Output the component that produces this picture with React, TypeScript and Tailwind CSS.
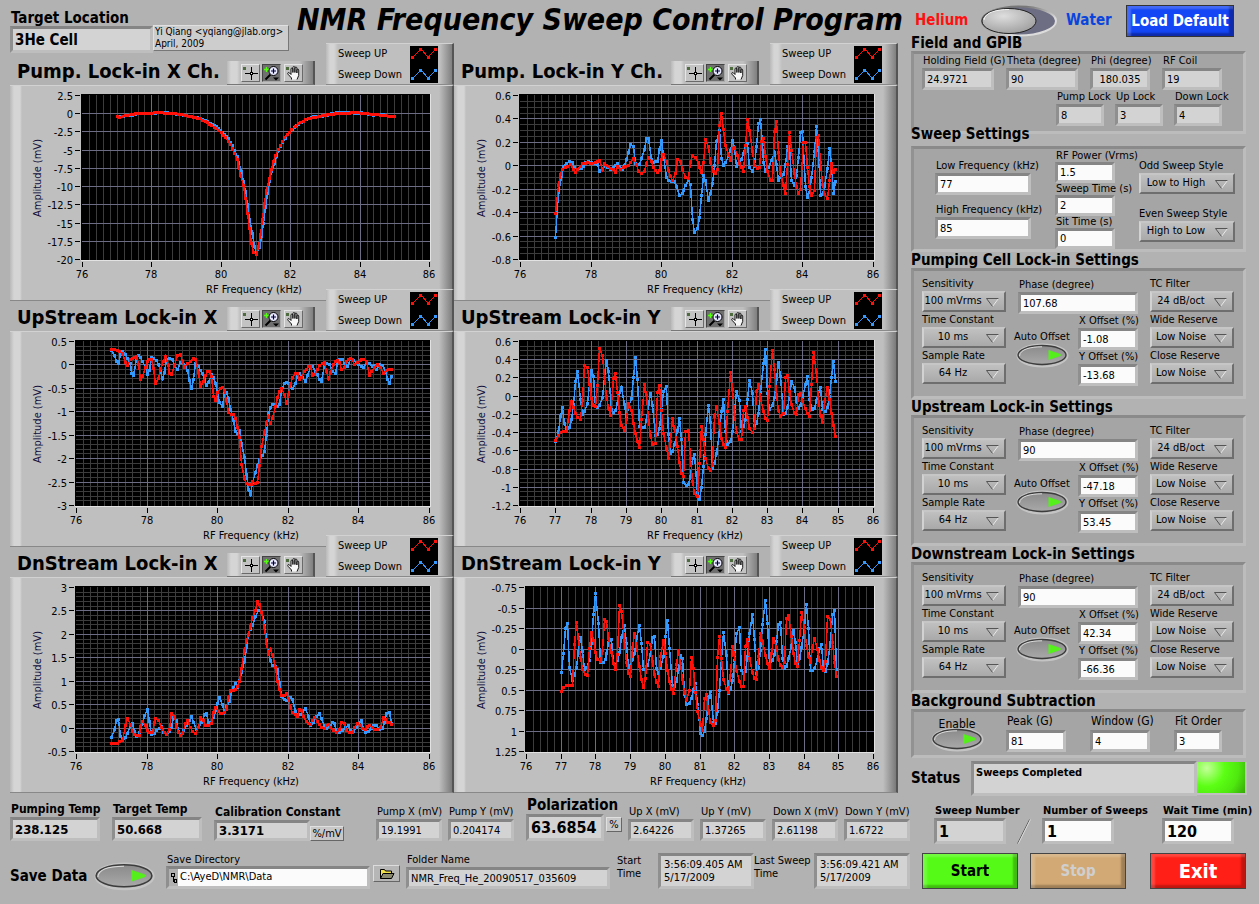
import { useId, useState } from "react";
import clsx from "clsx";

const RED = "#ff1008";
const BLUE = "#3399ff";

interface GraphSpec {
  title: string;
  left: number;
  yTop: number;
  yBottom: number;
  yStep: number;
  yMinor: number;
  xStep: number;
  offset: [number, number];
  up: string;
  down: string;
}

// Traces are stored at three units per pixel; offset moves them into the graph frame.
const graphs: GraphSpec[] = [
  {
    title: "Pump. Lock-in X Ch.",
    left: 72,
    yTop: 2.5,
    yBottom: -20,
    yStep: 2.5,
    yMinor: 1,
    xStep: 2,
    offset: [-10, -85],
    up: "351,349 359,351 367,348 375,346 390,344 400,342 415,341 430,340 450,340 468,338 486,338 500,340 520,340 535,343 560,346 580,352 600,356 615,364 628,372 642,381 655,390 665,398 671,407 677,413 684,423 691,433 698,446 704,461 711,479 716,499 722,526 729,556 736,595 742,640 748,686 754,730 761,757 769,763 775,740 781,704 788,658 794,610 800,572 808,536 814,509 821,485 827,466 834,449 840,436 848,424 854,412 861,403 868,396 875,388 885,380 895,371 910,363 925,356 940,352 955,350 975,345 1000,342 1025,341 1048,339 1070,338 1090,340 1110,342 1135,344 1150,346 1165,348 1182,349",
    down: "353,350 365,349 398,345 415,339 450,341 480,338 502,338 530,342 565,349 600,355 630,369 648,379 662,391 674,402 685,416 697,436 703,450 711,468 716,487 724,514 730,544 737,574 743,614 749,658 756,701 762,738 769,760 777,742 783,710 789,670 795,622 801,580 809,544 815,514 822,490 828,468 835,452 848,426 862,404 876,388 896,372 926,355 948,348 968,349 1002,339 1048,337 1070,340 1085,338 1120,345 1150,343 1164,350 1180,350",
  },
  {
    title: "Pump. Lock-in Y Ch.",
    left: 66,
    yTop: 0.6,
    yBottom: -0.8,
    yStep: 0.2,
    yMinor: 4,
    xStep: 2,
    offset: [-4, -85],
    up: "317,640 325,556 332,524 338,508 345,502 352,498 362,493 370,508 376,517 383,509 390,500 398,491 405,490 413,487 420,489 427,491 435,488 442,484 449,481 456,507 463,490 470,495 482,505 489,508 496,518 503,500 512,507 520,503 535,497 550,475 558,493 566,513 574,521 583,515 590,490 596,472 603,485 610,503 621,517 629,510 635,477 641,464 649,483 656,511 661,530 668,541 675,521 683,477 690,485 698,507 706,532 715,535 721,488 728,466 736,472 744,488 755,516 761,488 767,418 775,440 782,488 790,515 795,521 801,508 808,377 814,340 821,388 827,437 834,462 841,480 848,445 854,442 861,467 867,490 873,502 881,515 893,358 899,391 907,455 914,495 921,506 927,503 933,423 941,415 947,470 953,513 960,541 968,541 974,395 980,364 986,458 992,520 1000,555 1007,580 1012,493 1019,397 1025,452 1033,521 1040,560 1046,579 1052,568 1059,427 1067,427 1073,503 1079,560 1085,587 1092,572 1099,412 1106,406 1112,487 1118,553 1124,583 1133,595 1139,541 1144,490 1151,517 1157,508",
    down: "317,712 326,577 333,530 341,500 349,491 358,485 367,488 374,503 383,508 393,505 400,498 407,487 415,485 425,487 433,489 441,494 449,514 457,505 465,497 473,503 482,507 489,502 495,497 501,491 508,500 516,508 523,497 529,479 535,457 542,433 551,439 557,491 568,494 575,476 582,449 590,415 596,415 603,479 610,487 622,484 628,449 635,421 641,466 649,532 656,541 664,544 672,545 680,560 688,587 696,580 701,572 707,556 714,541 720,553 727,659 734,697 742,686 749,653 755,586 761,526 767,541 775,601 781,580 788,550 793,497 800,424 808,391 814,475 821,497 827,487 834,470 841,452 848,421 854,445 860,499 866,490 874,479 880,461 886,437 893,430 898,503 907,514 914,496 920,440 926,370 932,358 938,434 940,487 947,514 955,503 965,480 974,458 980,493 986,541 992,532 1000,523 1006,494 1013,439 1019,440 1025,541 1033,556 1040,526 1046,472 1052,397 1058,394 1066,560 1073,592 1079,578 1085,532 1092,455 1099,379 1105,452 1112,586 1118,583 1124,560 1131,505 1138,445 1144,490 1150,580 1157,545",
  },
  {
    title: "UpStream Lock-in X",
    left: 66,
    yTop: 0.5,
    yBottom: -3,
    yStep: 0.5,
    yMinor: 5,
    xStep: 2,
    offset: [-10, -35],
    up: "335,160 343,160 351,163 359,167 368,173 376,200 383,208 390,190 397,187 409,182 415,205 422,250 428,241 435,214 442,196 449,190 455,191 461,217 467,262 475,247 482,217 489,196 497,182 504,208 508,232 514,235 522,208 532,179 541,176 548,197 554,214 562,202 570,197 580,187 587,190 594,229 602,271 609,256 615,238 622,227 628,227 635,241 641,301 647,313 653,290 660,276 668,274 674,283 680,313 686,349 694,355 701,356 706,367 713,394 718,424 725,505 734,547 740,562 747,566 753,565 758,556 766,562 773,559 778,508 785,451 794,409 800,379 806,360 812,382 818,367 826,331 833,304 839,287 845,277 852,295 859,322 866,295 872,265 878,244 885,233 893,232 899,250 905,245 913,226 919,219 926,211 932,211 938,238 944,235 951,220 958,208 966,202 972,199 978,226 985,247 992,229 1000,205 1006,196 1013,193 1019,199 1024,220 1032,215 1040,196 1052,187 1058,190 1064,205 1072,200 1080,193 1091,190 1100,197 1108,238 1114,226 1122,215 1131,205 1140,215 1150,232 1158,223 1166,220 1175,220",
    down: "335,163 343,178 349,196 355,202 361,175 368,167 376,176 383,187 390,202 394,232 401,238 408,190 415,178 422,184 428,197 435,214 442,235 449,223 455,184 461,187 468,193 476,205 482,226 487,247 494,229 500,190 508,187 516,191 524,208 532,220 540,199 548,198 556,208 562,223 568,253 574,277 581,250 587,202 594,211 601,223 607,232 613,250 619,268 626,259 633,235 640,244 647,262 653,292 659,319 667,331 674,290 680,289 686,308 692,340 700,373 706,406 713,412 718,403 725,442 733,484 740,535 746,580 752,595 758,558 766,529 772,508 779,490 786,478 794,466 799,418 806,352 812,334 818,325 826,325 833,331 839,325 845,283 852,263 860,259 866,262 872,274 878,277 885,262 893,240 899,232 907,244 916,256 922,238 930,214 938,211 946,226 951,235 959,250 965,257 972,208 980,202 989,205 997,226 1005,232 1012,200 1019,190 1026,191 1034,202 1042,211 1050,190 1060,193 1068,199 1076,205 1083,211 1091,214 1099,200 1108,202 1116,211 1122,208 1130,220 1138,205 1146,208 1155,223 1162,250 1168,262 1175,241",
  },
  {
    title: "UpStream Lock-in Y",
    left: 66,
    yTop: 0.6,
    yBottom: -1.2,
    yStep: 0.2,
    yMinor: 4,
    xStep: 1,
    offset: [-4, -35],
    up: "317,433 325,418 332,410 340,406 350,406 359,343 365,316 377,352 383,364 391,371 398,313 404,208 411,215 417,265 425,307 431,328 437,331 443,268 449,157 458,178 464,245 470,301 476,337 482,358 490,247 496,232 502,289 509,349 515,388 524,403 530,370 536,323 543,343 550,382 557,412 563,436 569,454 575,371 584,265 590,298 596,373 602,418 608,445 617,442 623,290 629,268 635,343 641,412 649,457 656,487 662,436 668,367 674,397 682,451 688,499 695,532 701,541 707,406 715,403 721,487 728,556 734,592 743,602 749,503 755,391 761,430 767,487 775,517 782,524 788,505 794,361 800,331 808,382 815,427 821,445 827,454 833,346 841,229 848,280 854,356 860,409 867,430 875,430 881,343 887,332 893,364 899,397 908,409 914,397 920,286 926,265 932,307 941,346 947,367 953,373 959,271 968,163 974,220 980,295 986,343 992,361 1000,352 1006,244 1013,238 1019,286 1025,325 1033,352 1040,355 1046,296 1052,292 1058,316 1067,337 1073,352 1079,361 1085,265 1091,169 1100,229 1106,316 1112,358 1118,379 1124,316 1133,274 1139,310 1145,352 1151,388 1157,421",
    down: "317,437 325,406 331,361 338,334 344,382 350,404 359,394 365,370 371,325 377,256 383,226 392,310 398,355 404,346 411,322 417,265 425,223 431,241 436,330 443,334 449,328 458,304 464,245 470,194 476,226 484,340 491,350 497,343 502,322 508,289 515,274 524,325 530,370 536,330 543,307 550,244 557,184 563,251 569,391 576,394 584,394 590,373 596,325 602,292 608,328 616,418 623,415 629,397 635,340 641,286 649,271 656,415 662,472 668,466 674,445 682,403 688,367 694,430 701,559 708,568 715,565 721,541 728,487 734,475 743,590 749,611 755,574 761,511 767,415 775,328 782,379 788,517 794,503 800,472 808,409 815,346 821,310 827,406 833,446 842,436 848,406 854,346 860,286 867,313 875,406 881,391 887,370 893,311 899,253 908,292 914,388 920,382 926,352 932,289 941,202 947,160 953,292 959,340 968,328 974,304 980,250 986,199 992,241 1000,355 1006,352 1013,334 1019,304 1025,256 1034,274 1040,316 1046,337 1052,328 1058,304 1067,265 1073,241 1079,310 1086,340 1092,337 1100,313 1106,286 1112,274 1118,340 1125,346 1133,334 1139,301 1145,244 1151,196 1157,256",
  },
  {
    title: "DnStream Lock-in X",
    left: 66,
    yTop: 3,
    yBottom: -0.5,
    yStep: 0.5,
    yMinor: 5,
    xStep: 2,
    offset: [-10, -37],
    up: "335,610 343,610 351,609 359,605 368,601 376,556 383,536 390,553 397,574 404,583 411,586 417,585 422,560 428,545 435,556 442,571 449,577 457,576 463,547 467,536 476,541 484,562 492,578 500,583 508,568 515,520 522,529 528,559 535,577 542,586 548,580 556,550 562,541 570,562 578,574 586,580 594,562 602,532 610,541 617,556 626,557 634,550 641,517 647,502 654,515 661,520 668,520 674,517 680,508 686,472 692,452 700,451 706,448 713,440 718,424 725,385 733,331 740,301 746,283 752,260 758,232 766,211 773,184 778,193 784,217 792,262 799,310 806,342 812,328 818,343 826,383 832,424 838,448 845,466 852,467 860,460 866,476 872,502 878,517 885,524 893,529 899,508 905,511 911,529 919,544 926,549 932,553 938,541 944,532 951,544 958,553 964,562 972,565 980,556 986,553 992,562 1000,571 1008,577 1017,568 1024,547 1032,549 1040,571 1048,576 1058,577 1064,562 1072,550 1080,556 1088,565 1096,568 1102,559 1108,556 1116,562 1124,568 1132,568 1140,562 1150,532 1156,538 1162,547 1168,548 1175,553",
    down: "335,592 343,568 350,541 355,538 361,589 368,601 376,592 383,580 390,556 396,550 404,574 410,590 418,577 427,550 434,526 443,509 449,545 455,583 462,580 470,572 478,565 485,559 491,576 500,583 508,574 515,562 521,529 528,541 534,574 542,582 550,570 560,556 568,541 574,529 581,547 588,568 596,562 604,547 612,523 619,520 626,547 634,547 641,532 648,508 653,490 658,472 667,493 674,517 680,500 688,485 692,462 700,442 706,430 713,441 718,422 725,397 734,364 740,323 746,284 752,268 758,255 767,229 774,211 784,216 792,243 799,302 806,340 812,362 818,376 826,379 833,388 839,427 845,470 852,479 860,481 866,476 872,472 878,479 885,515 893,524 900,523 907,515 916,505 924,529 932,556 940,547 950,529 958,520 965,535 972,559 980,565 990,556 997,547 1004,550 1010,574 1018,577 1028,572 1036,562 1044,556 1052,571 1060,574 1068,562 1076,550 1084,541 1090,568 1097,577 1105,574 1113,565 1121,557 1130,557 1138,568 1146,565 1153,547 1160,520 1168,517 1175,550",
  },
  {
    title: "DnStream Lock-in Y",
    left: 72,
    yTop: -0.75,
    yBottom: 1.25,
    yStep: 0.25,
    yMinor: 1,
    xStep: 1,
    offset: [-4, -37],
    up: "334,455 341,442 348,437 358,436 368,436 374,313 380,247 386,295 392,352 398,388 406,403 412,406 418,325 425,277 431,302 437,337 443,358 451,364 458,331 464,238 470,244 476,295 484,337 490,370 496,388 503,343 509,196 515,214 523,301 529,367 535,400 541,409 547,322 554,280 560,319 569,379 575,418 581,442 587,415 593,307 601,313 607,364 613,403 620,427 626,439 632,349 640,301 646,340 653,391 659,424 665,448 671,460 679,373 685,331 691,370 698,418 704,458 710,478 718,451 725,352 731,385 737,457 743,514 751,553 757,571 763,475 770,463 776,511 782,547 791,556 797,541 803,352 809,289 815,355 821,418 829,448 835,457 842,406 848,319 854,343 860,391 868,424 874,439 881,439 887,319 893,298 899,355 907,397 914,415 920,418 926,349 932,280 938,304 946,346 952,370 958,385 965,340 971,295 978,322 986,358 992,376 998,382 1004,367 1010,236 1016,226 1025,289 1031,340 1037,370 1043,379 1049,301 1055,217 1063,262 1069,316 1076,349 1082,367 1087,322 1094,295 1103,328 1109,361 1115,383 1121,391 1127,364 1133,229 1142,238 1148,307 1154,367 1160,409",
    down: "334,397 340,340 346,265 352,251 359,382 368,420 374,406 380,382 386,334 392,292 398,334 404,388 410,382 418,361 425,310 431,223 437,160 446,250 452,367 459,367 465,358 470,340 476,307 484,298 490,370 497,376 503,361 509,337 515,292 524,256 530,310 536,382 541,376 547,358 554,340 560,295 569,256 575,310 581,388 587,388 593,376 601,343 607,292 613,289 620,385 626,400 632,385 640,349 646,289 652,241 659,325 667,436 673,439 680,424 686,388 692,346 698,355 704,463 710,493 718,490 725,475 731,448 737,430 743,493 751,580 757,586 763,574 769,535 776,472 782,454 790,547 797,550 803,514 809,451 815,355 821,277 829,346 835,460 842,448 848,421 854,361 860,280 868,262 874,391 881,400 887,394 893,349 899,280 907,223 914,298 920,400 926,382 932,331 938,253 946,181 952,250 958,370 966,361 972,343 978,304 986,253 992,247 998,355 1004,385 1010,379 1016,355 1025,316 1031,271 1037,307 1043,373 1049,355 1055,322 1063,262 1069,193 1076,265 1082,391 1088,391 1094,385 1103,358 1109,325 1115,313 1121,388 1127,394 1133,370 1142,307 1148,223 1154,211 1160,388",
  },
];

function parseTrace(trace: string) {
  const points = trace.split(" ").map((p) => p.split(",").map(Number));
  const out: number[][] = [];
  points.forEach(([x, y], i) => {
    if (i > 0) {
      const [px, py] = points[i - 1];
      const n = Math.round((x - px) / 7);
      for (let k = 1; k < n; k++) {
        out.push([px + ((x - px) * k) / n, py + ((y - py) * k) / n]);
      }
    }
    out.push([x, y]);
  });
  return out;
}

function Trace({ data, color, offset }: { data: string; color: string; offset: [number, number] }) {
  const points = parseTrace(data).map(([x, y]) => [
    Math.round(x / 3 + offset[0] - 0.5),
    Math.round(y / 3 + offset[1] - 0.5),
  ]);
  return (
    <g fill={color} stroke="none">
      <polyline
        points={points.map(([x, y]) => `${x + 0.5},${y + 0.5}`).join(" ")}
        fill="none"
        stroke={color}
        strokeWidth={1.5}
      />
      {points.map(([x, y], i) => (
        <rect key={i} x={x - 1} y={y - 1} width={3} height={3} />
      ))}
    </g>
  );
}

const TOP = 10;
const BOTTOM = 175;
const RIGHT = 420;

function Plot({ graph }: { graph: GraphSpec }) {
  const { left, yTop, yBottom, yStep, yMinor, xStep } = graph;
  const toX = (khz: number) => Math.round(left + ((khz - 76) / 10) * (RIGHT - left - 1));
  const rows = Math.round(Math.abs(yBottom - yTop) / yStep);
  const toY = (row: number) => Math.round(TOP + (row / rows) * (BOTTOM - TOP - 1));
  const dir = yBottom > yTop ? 1 : -1;

  return (
    <svg
      viewBox="0 0 444 216"
      className="block w-full h-auto text-[11px]"
      role="img"
      aria-label={graph.title}
    >
      <g shapeRendering="crispEdges">
        <rect x={left - 1} y={TOP - 1} width={RIGHT - left + 2} height={BOTTOM - TOP + 2} fill="#e2e2e2" />
        <rect x={left - 1} y={TOP - 1} width={RIGHT - left + 1} height={BOTTOM - TOP + 1} fill="#000" />
        {/* Minor grid */}
        {Array.from({ length: 49 }, (_, i) => (
          <rect key={i} x={toX(76 + (i + 1) * 0.2)} y={TOP} width={1} height={BOTTOM - TOP} fill="#3c3c3c" />
        ))}
        {yMinor > 1 &&
          Array.from({ length: rows * yMinor - 1 }, (_, i) => (
            <rect key={i} x={left} y={toY((i + 1) / yMinor)} width={RIGHT - left} height={1} fill="#3c3c3c" />
          ))}
        {/* Major grid */}
        {Array.from({ length: 10 / xStep - 1 }, (_, i) => (
          <rect key={i} x={toX(76 + (i + 1) * xStep)} y={TOP} width={1} height={BOTTOM - TOP} fill="#6c6c84" />
        ))}
        {Array.from({ length: rows - 1 }, (_, i) => (
          <rect key={i} x={left} y={toY(i + 1)} width={RIGHT - left} height={1} fill="#6c6c84" />
        ))}
        <Trace data={graph.down} color={BLUE} offset={graph.offset} />
        <Trace data={graph.up} color={RED} offset={graph.offset} />
        {Array.from({ length: rows + 1 }, (_, i) => (
          <rect key={i} x={left - 7} y={toY(i)} width={5} height={1} fill="#000" />
        ))}
        {Array.from({ length: 10 / xStep + 1 }, (_, i) => (
          <rect key={i} x={toX(76 + i * xStep)} y={177} width={1} height={5} fill="#000" />
        ))}
      </g>
      {Array.from({ length: rows + 1 }, (_, i) => (
        <text key={i} x={left - 9} y={toY(i) + 5} textAnchor="end">
          {String(Number((yTop + dir * i * yStep).toFixed(2)))}
        </text>
      ))}
      {Array.from({ length: 10 / xStep + 1 }, (_, i) => (
        <text key={i} x={toX(76 + i * xStep)} y={193} textAnchor="middle">
          {76 + i * xStep}
        </text>
      ))}
      <text x={(left + RIGHT) / 2 - 2} y={208} textAnchor="middle">
        RF Frequency (kHz)
      </text>
      <text transform="translate(31 93) rotate(-90)" textAnchor="middle" fill="#10103c">
        Amplitude (mV)
      </text>
    </svg>
  );
}

function LegendSample({ color, y }: { color: string; y: number }) {
  return (
    <g fill={color}>
      <polyline points={`3,${y + 8} 11,${y} 18,${y + 8} 26,${y}`} fill="none" stroke={color} />
      <rect x={1} y={y + 7} width={3} height={3} />
      <rect x={9} y={y - 1} width={3} height={3} />
      <rect x={17} y={y + 7} width={3} height={3} />
      <rect x={24} y={y - 1} width={3} height={3} />
    </g>
  );
}

function Palette() {
  const tool =
    "h-[18px] w-[19px] border border-t-[#e6e6e6] border-l-[#e6e6e6] border-r-[#6a6a6a] border-b-[#6a6a6a]";
  return (
    <div className="flex h-6 w-[88px] items-center gap-[2px] border-b border-b-[#777] border-r-2 border-r-[#555] bg-[linear-gradient(to_right,#b9b9b9_0,#d5d5d5_4px,#d5d5d5_10px,#bfbfbf_13px,#bfbfbf_72px,#808080)] pl-[14px]">
      <button type="button" aria-label="Cursor movement" className={clsx(tool, "bg-[#c3c3c3]")}>
        <svg viewBox="0 0 17 16" className="block" shapeRendering="crispEdges">
          <rect x="1" y="2" width="3" height="3" fill="#4d6b3f" />
          <path d="M9.500 2v5M9.500 10v5M3 8.500h5M11 8.500h5" stroke="#000" />
          <rect x="8" y="7" width="3" height="3" />
          <rect x="9" y="8" width="1" height="1" fill="#fff" />
        </svg>
      </button>
      <button
        type="button"
        aria-label="Zoom"
        className="h-[18px] w-[19px] border border-t-[#444] border-l-[#444] border-r-[#aaa] border-b-[#aaa] bg-[#6f6f6f]"
      >
        <svg viewBox="0 0 17 16" className="block">
          <path d="M3.500 2v5M1 4.500h5" stroke="#55ff11" strokeWidth="1.400" />
          <path d="M7.500 9.500 2.500 14.500" stroke="#000" strokeWidth="2" />
          <circle cx="10.500" cy="6" r="4.500" fill="#e8e8ff" stroke="#000" />
          <path d="M10.500 3.500v5M8 6h5" stroke="#000033" strokeWidth="1.200" />
          <path d="M10 12.500h6l-3 3z" />
        </svg>
      </button>
      <button type="button" aria-label="Pan" className={clsx(tool, "ml-px bg-[#c3c3c3]")}>
        <svg viewBox="0 0 17 16" className="block">
          <rect x="1" y="2" width="3" height="3" fill="#4d6b3f" />
          <path
            d="M6.500 14.500V13L3 9.200c-.9-1.500.6-2.200 1.600-1.200L6 9.500V4c0-1.300 1.900-1.300 1.900 0v3.500V2.500c0-1.300 2-1.300 2 0v5V3c0-1.300 2-1.300 2 0v5V5c0-1.200 1.800-1.200 1.800 0v5.500L12 14.500"
            fill="#f8f8f8"
            stroke="#000"
            strokeWidth="0.900"
          />
        </svg>
      </button>
    </div>
  );
}

function Graph({ graph }: { graph: GraphSpec }) {
  return (
    <section className="-mb-3">
      <div className="relative z-10 flex h-[42px] items-end gap-[11px]">
        <div className="flex flex-1 items-end">
          <h2 className="flex-1 pl-[7px] text-[20px] leading-7 font-bold whitespace-nowrap">{graph.title}</h2>
          <Palette />
        </div>
        <div className="flex h-[42px] w-[128px] items-center justify-between border-t border-r-2 border-b border-t-[#d2d2d2] border-r-[#555] border-b-[#8a8a8a] bg-[linear-gradient(to_right,#b9b9b9_0,#d5d5d5_4px,#d5d5d5_8px,#bfbfbf_12px,#bfbfbf_114px,#808080)] pr-[14px] pl-3">
          <ul className="text-[11px] leading-[21px]">
            <li>Sweep UP</li>
            <li>Sweep Down</li>
          </ul>
          <svg width="28" height="37" shapeRendering="crispEdges" aria-hidden="true">
            <rect width="28" height="37" fill="#000" />
            <LegendSample color={RED} y={3} />
            <LegendSample color={BLUE} y={24} />
          </svg>
        </div>
      </div>
      <div className="border-t border-r-2 border-b border-t-[#d2d2d2] border-r-[#555] border-b-[#888] bg-[linear-gradient(to_right,#b9b9b9_0,#d5d5d5_4px,#d5d5d5_10px,#bfbfbf_12px,#bfbfbf_calc(100%-13px),#7a7a7a)]">
        <div className="-mr-[2px] -mt-px -mb-px">
          <Plot graph={graph} />
        </div>
      </div>
    </section>
  );
}

const sunken =
  "border-[3px] border-t-[#858585] border-l-[#8f8f8f] border-r-[#bebebe] border-b-[#bebebe]";

interface FieldProps {
  label: string;
  value: string;
  width: string;
  height?: string;
  readOnly?: boolean;
  labelClass?: string;
  inputClass?: string;
}

function Field({
  label,
  value,
  width,
  height = "h-[22px]",
  readOnly,
  labelClass = "text-[11px] leading-[14px]",
  inputClass = "text-[11px]",
}: FieldProps) {
  const id = useId();
  return (
    <div className={clsx("flex flex-col", width)}>
      <label htmlFor={id} className={clsx("relative pl-px whitespace-nowrap", labelClass)}>
        {label}
      </label>
      <input
        id={id}
        defaultValue={value}
        readOnly={readOnly}
        className={clsx(
          "w-full px-[2px] outline-none",
          sunken,
          height,
          readOnly ? "bg-[#d3d3d3]" : "bg-[#fbfbfb]",
          inputClass,
        )}
      />
    </div>
  );
}

interface RingProps {
  label: string;
  options: string[];
  width: string;
}

function Ring({ label, options, width }: RingProps) {
  const id = useId();
  return (
    <div className={width}>
      <label htmlFor={id} className="block text-[11px] leading-[15px] whitespace-nowrap">
        {label}
      </label>
      <div className="relative">
        <select
          id={id}
          className="block h-[21px] w-full appearance-none border-2 border-t-[#c6c6c6] border-r-[#6e6e6e] border-b-[#6e6e6e] border-l-[#d2d2d2] bg-[linear-gradient(#c0c0c0,#a9a9a9)] pr-[22px] text-center text-[11px] outline-none"
        >
          {options.map((o) => (
            <option key={o}>{o}</option>
          ))}
        </select>
        <svg className="pointer-events-none absolute top-[7px] right-[7px]" width="13" height="9" fill="none">
          <path d="M12.500 0.500 6.500 8.500" stroke="#e8e8e8" />
          <path d="M12.500 0.500H0.500L6.500 8.500" stroke="#555" />
        </svg>
      </div>
    </div>
  );
}

function OvalButton({ label, className }: { label: string; className: string }) {
  const [on, setOn] = useState(true);
  return (
    <button type="button" aria-label={label} aria-pressed={on} onClick={() => setOn(!on)} className={className}>
      <svg viewBox="0 0 50 22" className="block w-full overflow-visible">
        <defs>
          <linearGradient id="oval" x1="0" x2="0" y1="0" y2="1">
            <stop offset="0" stopColor="#8a8a8a" />
            <stop offset="1" stopColor="#a9a9a9" />
          </linearGradient>
        </defs>
        <ellipse cx="25.500" cy="11.500" rx="25" ry="11" fill="none" stroke="#c4c4c4" strokeWidth="2" />
        <ellipse cx="25" cy="11" rx="24" ry="9.500" fill="url(#oval)" stroke="#3c3c3c" strokeWidth="1.400" />
        <path d="M2.500 12C3 5 14 2.800 25 2.800" fill="none" stroke="#dcdcdc" />
        <path d="M31.500 6 42 9.500c2.600.9 2.600 2.200 0 3L31.500 16z" fill={on ? "#55f01c" : "#4b6b3c"} />
      </svg>
    </button>
  );
}

function Panel({ title, className, children }: { title: string; className: string; children: React.ReactNode }) {
  return (
    <section>
      <h2 className="relative h-4 text-[15px] leading-4 font-bold whitespace-nowrap">{title}</h2>
      <div
        className={clsx(
          "w-[335px] border-[3px] border-t-[#8a8a8a] border-l-[#929292] border-r-[#bcbcbc] border-b-[#bcbcbc] bg-[#a5a5a5]",
          className,
        )}
      >
        {children}
      </div>
    </section>
  );
}

const lockins = [
  { title: "Pumping Cell Lock-in Settings", phase: "107.68", x: "-1.08", y: "-13.68" },
  { title: "Upstream Lock-in Settings", phase: "90", x: "-47.18", y: "53.45" },
  { title: "Downstream Lock-in Settings", phase: "90", x: "42.34", y: "-66.36" },
];

function LockinPanel({ data }: { data: (typeof lockins)[number] }) {
  return (
    <Panel title={data.title} className="flex gap-3 pt-[5px] pb-[10px] pl-2">
      <div className="flex flex-col">
        <Ring label="Sensitivity" options={["100 mVrms", "10 mVrms"]} width="w-[84px]" />
        <Ring label="Time Constant" options={["10 ms", "30 ms"]} width="w-[84px]" />
        <Ring label="Sample Rate" options={["64 Hz", "128 Hz"]} width="w-[84px]" />
      </div>
      <div className="flex w-[120px] flex-col pt-[2px]">
        <Field label="Phase (degree)" value={data.phase} width="w-full" />
        <div className="flex justify-between">
          <div className="-ml-1 flex flex-col items-center pt-4">
            <span className="text-[11px] leading-[14px] whitespace-nowrap">Auto Offset</span>
            <OvalButton label="Auto Offset" className="w-[50px]" />
          </div>
          <div>
            <Field label="X Offset (%)" value={data.x} width="w-[60px]" />
            <Field label="Y Offset (%)" value={data.y} width="w-[60px]" />
          </div>
        </div>
      </div>
      <div className="flex flex-col">
        <Ring label="TC Filter" options={["24 dB/oct", "12 dB/oct"]} width="w-[84px]" />
        <Ring label="Wide Reserve" options={["Low Noise", "Normal"]} width="w-[84px]" />
        <Ring label="Close Reserve" options={["Low Noise", "Normal"]} width="w-[84px]" />
      </div>
    </Panel>
  );
}

function GasSwitch() {
  const [water, setWater] = useState(false);
  return (
    <button
      type="button"
      role="switch"
      aria-checked={water}
      aria-label="Helium or Water"
      onClick={() => setWater(!water)}
      className="w-[78px]"
    >
      <svg viewBox="0 0 78 32" className="block w-full">
        <defs>
          <radialGradient id="knob" cx="0.4" cy="0.3" r="0.7">
            <stop offset="0" stopColor="#dedede" />
            <stop offset="1" stopColor="#a2a2a2" />
          </radialGradient>
          <linearGradient id="rim" x1="0" x2="1" y1="0" y2="1">
            <stop offset="0.300" stopColor="#777" />
            <stop offset="0.700" stopColor="#dcdcdc" />
          </linearGradient>
        </defs>
        <ellipse cx="39" cy="16" rx="37" ry="14.500" fill="#6d6d84" stroke="url(#rim)" strokeWidth="2" />
        <ellipse cx={water ? 49 : 29} cy="16" rx="27" ry="12.500" fill="url(#knob)" stroke="#222" />
        <path d="M4 15C5 7 17 4.500 29 4.500" fill="none" stroke="#f4f4f4" />
      </svg>
    </button>
  );
}

function TimeBox({ label, value, width }: { label: string; value: string; width: string }) {
  const id = useId();
  return (
    <div className="flex items-start">
      <label htmlFor={id} className={clsx("pt-px text-[11px] leading-[13px] whitespace-pre-line", width)}>
        {label}
      </label>
      <textarea
        id={id}
        readOnly
        rows={2}
        defaultValue={value}
        className={clsx(
          "block h-9 w-24 resize-none overflow-hidden bg-[#d3d3d3] px-[3px] pt-[2px] text-[11px] leading-[13px] whitespace-pre outline-none",
          sunken,
        )}
      />
    </div>
  );
}

const actionButton =
  "h-9 w-24 border border-[#444] font-bold shadow-[inset_4px_3px_2px_rgba(255,255,255,0.18),inset_-4px_-3px_2px_rgba(0,0,0,0.25)]";

const boldLabel = "text-[12px] leading-[15px] font-bold";
const sweepLabel = "text-[11px] leading-[15px] font-bold";

export default function App() {
  return (
    <div className="flex min-h-[904px] w-full bg-[#b2b2b2] font-['DejaVu_Sans_Condensed','DejaVu_Sans',sans-serif] text-black">
      <main className="min-w-0 flex-1">
        <header className="flex h-[43px] items-start pl-[10px]">
          <div className="pt-[10px]">
            <Field
              label="Target Location"
              value="3He Cell"
              width="w-[143px]"
              height="h-[27px]"
              labelClass="text-[15px] leading-4 font-bold"
              inputClass="text-[15px] font-bold"
              readOnly
            />
          </div>
          <div className="mt-[25px] h-[26px] w-[136px] shrink-0 border border-t-[#e0e0e0] border-l-[#e0e0e0] border-r-[#777] border-b-[#777] bg-[#cdcdcd] pl-px text-[10px] leading-3 whitespace-nowrap">
            Yi Qiang &lt;yqiang@jlab.org&gt;
            <br />
            April, 2009
          </div>
          <h1 className="flex-1 pl-2 text-[30px] leading-10 font-bold whitespace-nowrap italic">
            NMR Frequency Sweep Control Program
          </h1>
        </header>

        <div className="grid grid-cols-2 pr-[13px] pb-3 pl-[10px]">
          {graphs.map((g) => (
            <Graph key={g.title} graph={g} />
          ))}
        </div>

        {/* Readouts */}
        <div className="flex h-12 items-end pl-[10px]">
          <div className="flex gap-3">
            <Field label="Pumping Temp" value="238.125" width="w-[90px]" height="h-6" labelClass={boldLabel} inputClass="text-[13px] font-bold" readOnly />
            <Field label="Target Temp" value="50.668" width="w-[90px]" height="h-6" labelClass={boldLabel} inputClass="text-[13px] font-bold" readOnly />
          </div>
          <div className="ml-3 flex items-end">
            <Field label="Calibration Constant" value="3.3171" width="w-24" height="h-[21px]" labelClass={boldLabel} inputClass="text-[13px] font-bold" readOnly />
            <span className="h-[15px] w-[34px] border border-t-[#e0e0e0] border-l-[#e0e0e0] border-r-[#666] border-b-[#666] bg-[#c8c8c8] text-center text-[11px] leading-[14px]">
              %/mV
            </span>
          </div>
          <div className="ml-8 flex gap-[6px]">
            <Field label="Pump X (mV)" value="19.1991" width="w-[66px]" readOnly />
            <Field label="Pump Y (mV)" value="0.204174" width="w-[66px]" readOnly />
          </div>
          <div className="ml-3 flex items-end">
            <Field label="Polarization" value="63.6854" width="w-[78px]" height="h-[27px]" labelClass="text-[15px] leading-[18px] font-bold" inputClass="text-[16px] font-bold" readOnly />
            <span className="mb-[9px] ml-[2px] h-[15px] w-4 border border-t-[#e0e0e0] border-l-[#e0e0e0] border-r-[#666] border-b-[#666] bg-[#c8c8c8] text-center text-[11px] leading-[14px]">
              %
            </span>
          </div>
          <div className="ml-[6px] flex gap-[6px]">
            <Field label="Up X (mV)" value="2.64226" width="w-[66px]" readOnly />
            <Field label="Up Y (mV)" value="1.37265" width="w-[66px]" readOnly />
            <Field label="Down X (mV)" value="2.61198" width="w-[66px]" readOnly />
            <Field label="Down Y (mV)" value="1.6722" width="w-[66px]" readOnly />
          </div>
        </div>

        {/* Save options */}
        <div className="flex h-12 items-end pl-[10px]">
          <div className="flex w-[156px] items-center gap-2">
            <span className="text-[15px] leading-6 font-bold whitespace-nowrap">Save Data</span>
            <OvalButton label="Save Data" className="w-[58px]" />
          </div>
          <div className="w-[204px]">
            <label htmlFor="save-dir" className="block pl-px text-[11px] leading-[13px]">
              Save Directory
            </label>
            <div className={clsx("flex h-[23px] bg-[#b0b0b0]", sunken)}>
              <svg width="9" height="17" fill="none" stroke="#000" shapeRendering="crispEdges" aria-hidden="true">
                <path d="M2.500 4.500h3v3h-3zM4.500 8v5M4.500 10.500h2.500M5.500 10.500h2v3h-2z" />
              </svg>
              <input
                id="save-dir"
                defaultValue={"C:\\AyeD\\NMR\\Data"}
                className="min-w-0 flex-1 bg-[#fbfbfb] px-[2px] text-[11px] outline-none"
              />
            </div>
          </div>
          <button
            type="button"
            aria-label="Browse"
            className="mb-[7px] ml-[3px] flex h-[17px] w-[27px] items-center justify-center border border-t-[#dcdcdc] border-l-[#dcdcdc] border-r-[#666] border-b-[#666] bg-[#b6b6b6]"
          >
            <svg width="16" height="12" viewBox="0 0 16 12">
              <path d="M1.500 10.500v-9h4l1 1.500h6v2" fill="#f2e24a" stroke="#000" />
              <path d="M1.500 10.500 4 5.500h11l-2.500 5z" fill="#8a8a70" stroke="#000" />
            </svg>
          </button>
          <div className="ml-[6px]">
            <Field label="Folder Name" value="NMR_Freq_He_20090517_035609" width="w-[204px]" height="h-[22px]" readOnly />
          </div>
          <div className="ml-[7px] flex">
            <TimeBox label={"Start\nTime"} value={"3:56:09.405 AM\n5/17/2009"} width="w-[41px]" />
            <TimeBox label={"Last Sweep\nTime"} value={"3:56:09.421 AM\n5/17/2009"} width="w-[60px]" />
          </div>
        </div>
      </main>

      <aside className="w-[348px] shrink-0">
        <div className="flex h-[35px] items-start text-[15px] font-bold">
          <span className="w-[69px] pl-1 leading-10 text-[#ff1010]">Helium</span>
          <div className="pt-[5px]">
            <GasSwitch />
          </div>
          <span className="w-[68px] pl-2 leading-10 text-[#0a44dd]">Water</span>
          <button
            type="button"
            className="mt-[5px] h-8 w-[108px] border border-[#333] bg-[#1446f5] text-[15px] font-bold whitespace-nowrap text-white shadow-[inset_4px_3px_2px_rgba(255,255,255,0.2),inset_-4px_-3px_2px_rgba(0,0,60,0.4)]"
          >
            Load Default
          </button>
        </div>

        <Panel title="Field and GPIB" className="pb-[5px] pl-2">
          <div className="flex gap-3">
            <Field label="Holding Field (G)" value="24.9721" width="w-[72px]" readOnly />
            <Field label="Theta (degree)" value="90" width="w-[72px]" readOnly />
            <Field label="Phi (degree)" value="180.035" width="w-[60px]" inputClass="text-[11px] text-center" readOnly />
            <Field label="RF Coil" value="19" width="w-[60px]" readOnly />
          </div>
          <div className="flex gap-[11px] pl-[134px]">
            <Field label="Pump Lock" value="8" width="w-12" readOnly />
            <Field label="Up Lock" value="3" width="w-12" readOnly />
            <Field label="Down Lock" value="4" width="w-12" readOnly />
          </div>
        </Panel>

        <div className="-mt-2">
          <Panel title="Sweep Settings" className="mt-1 flex gap-6 pl-[21px]">
            <div className="flex flex-col gap-2 pt-[10px]">
              <Field label="Low Frequency (kHz)" value="77" width="w-24" />
              <Field label="High Frequency (kHz)" value="85" width="w-24" />
            </div>
            <div className="flex flex-col pt-px">
              <Field label="RF Power (Vrms)" value="1.5" width="w-[60px]" height="h-[21px]" labelClass="text-[11px] leading-3" />
              <Field label="Sweep Time (s)" value="2" width="w-[60px]" height="h-[21px]" labelClass="text-[11px] leading-3" />
              <Field label="Sit Time (s)" value="0" width="w-[60px]" height="h-[21px]" labelClass="text-[11px] leading-3" />
            </div>
            <div className="flex flex-col gap-3 pt-[9px]">
              <Ring label="Odd Sweep Style" options={["Low to High", "High to Low"]} width="w-24" />
              <Ring label="Even Sweep Style" options={["High to Low", "Low to High"]} width="w-24" />
            </div>
          </Panel>
        </div>

        {lockins.map((l) => (
          <LockinPanel key={l.title} data={l} />
        ))}

        <Panel title="Background Subtraction" className="flex gap-6 pb-[3px] pl-[18px]">
          <div className="flex w-[50px] flex-col items-center pt-1">
            <span className="relative h-3 text-[12px] leading-4">Enable</span>
            <OvalButton label="Enable" className="w-[50px]" />
          </div>
          <Field label="Peak (G)" value="81" width="w-[60px]" labelClass="text-[12px] leading-[18px]" />
          <Field label="Window (G)" value="4" width="w-[60px]" labelClass="text-[12px] leading-[18px]" />
          <Field label="Fit Order" value="3" width="w-12" labelClass="text-[12px] leading-[18px]" />
        </Panel>

        <div className="mt-[3px] flex items-center">
          <label htmlFor="status" className="w-[60px] text-[15px] font-bold">
            Status
          </label>
          <textarea
            id="status"
            readOnly
            defaultValue="Sweeps Completed"
            className={clsx(
              "block h-[35px] w-[226px] resize-none overflow-hidden bg-[#d3d3d3] px-[2px] text-[11px] leading-[18px] font-bold outline-none",
              sunken,
            )}
          />
          <div className="h-[33px] w-[50px] border-r-2 border-b-2 border-[#c0c0c0] bg-[radial-gradient(circle_at_20%_20%,#c4ff9a,#5cff14_40%,#4fe80f_70%,#35a808)]" />
        </div>

        <div className="mt-[7px] flex items-end pl-[23px]">
          <Field label="Sweep Number" value="1" width="w-[72px]" height="h-[26px]" labelClass={sweepLabel} inputClass="text-[16px] font-bold" readOnly />
          <svg width="36" height="28" fill="none" aria-hidden="true">
            <path d="M11.500 27.500 23.500 3.500" stroke="#666" />
            <path d="M12.500 27.500 24.500 3.500" stroke="#d8d8d8" />
          </svg>
          <Field label="Number of Sweeps" value="1" width="w-[72px]" height="h-[26px]" labelClass={sweepLabel} inputClass="text-[16px] font-bold" />
          <div className="ml-12">
            <Field label="Wait Time (min)" value="120" width="w-[72px]" height="h-[26px]" labelClass={sweepLabel} inputClass="text-[16px] font-bold" />
          </div>
        </div>

        <div className="mt-[9px] flex pl-[11px]">
          <button type="button" className={clsx(actionButton, "bg-[#55fb16] text-[15px]")}>
            Start
          </button>
          <button type="button" disabled className={clsx(actionButton, "ml-3 bg-[#d2a974] text-[15px] text-[#cfcfcf]")}>
            Stop
          </button>
          <button type="button" className={clsx(actionButton, "ml-6 bg-[#ff1f16] text-[20px] text-white")}>
            Exit
          </button>
        </div>
      </aside>
    </div>
  );
}
